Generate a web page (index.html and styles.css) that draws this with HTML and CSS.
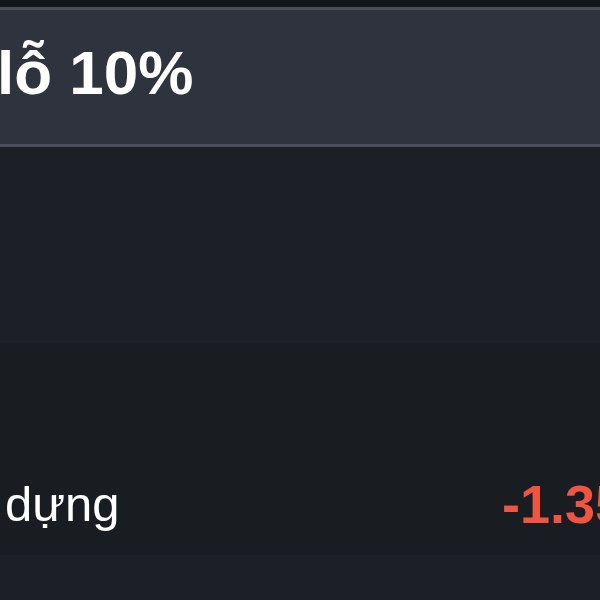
FILE: index.html
```html
<!DOCTYPE html>
<html lang="vi">
<head>
  <meta charset="UTF-8">
  <meta name="viewport" content="width=device-width, initial-scale=1.0">
  <title>Cắt lỗ 10%</title>
  <link rel="stylesheet" href="styles.css">
</head>
<body>

  <div class="topbar"></div>

  <!-- Title panel -->
  <div class="panel-head">
    <h1 class="panel-title">lỗ 10%</h1>
  </div>

  <div class="spacer"></div>

  <!-- Sector row -->
  <div class="sector-row">
    <span class="sector-name">dựng</span>
    <span class="sector-change down">-1.35%</span>
  </div>

</body>
</html>
```

FILE: styles.css
```css
/* Page */
body {
  margin: 0;
  padding: 0;
  font-family: 'Liberation Sans', Arial, sans-serif;
  background: #1c1f26;
  color: #ffffff;
  width: 600px;
  height: 600px;
  overflow: hidden;
}

.topbar {
  height: 7px;
  background: #12151c;
}

/* Title panel */
.panel-head {
  height: 134px;
  background: #2f333d;
  border-top: 3px solid #4b4f59;
  border-bottom: 3px solid #4b4f59;
  display: flex;
  align-items: center;
}

.panel-title {
  margin: 0 0 8px -3px;
  font-size: 62px;
  font-weight: 700;
  line-height: 1;
  white-space: nowrap;
}

.spacer {
  height: 196px;
}

/* Sector row */
.sector-row {
  height: 212px;
  background: #191c20;
  display: flex;
  align-items: flex-end;
  box-sizing: border-box;
  padding-bottom: 24px;
  white-space: nowrap;
}

.sector-name {
  flex: 1;
  padding-left: 5px;
  padding-bottom: 2px;
  font-size: 49px;
  line-height: 1;
}

.sector-change {
  width: 98px;
  overflow: hidden;
  font-size: 54px;
  font-weight: 700;
  line-height: 1;
}

.sector-change.down {
  color: #ef5540;
}
```
